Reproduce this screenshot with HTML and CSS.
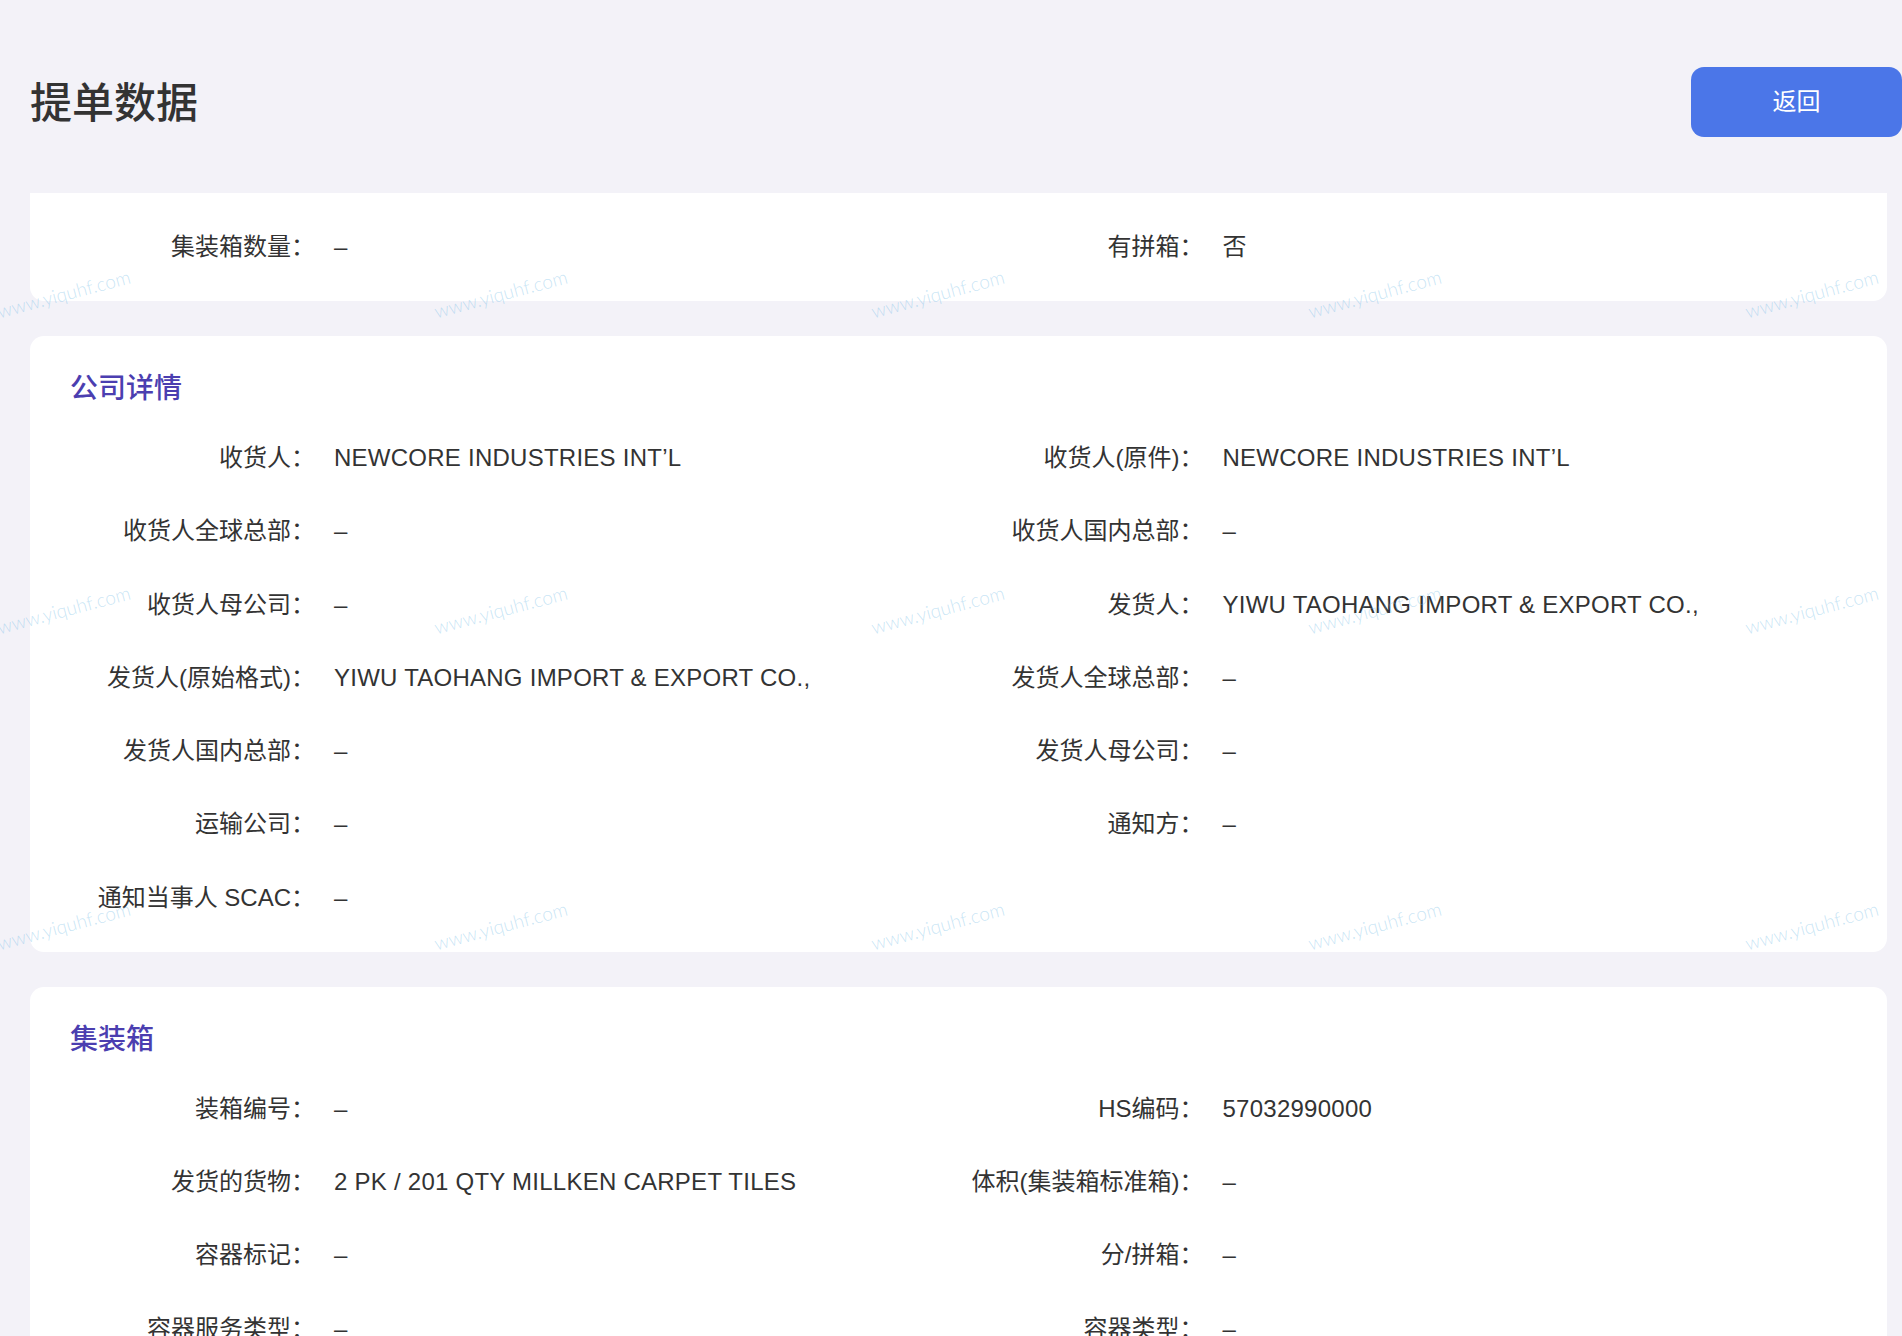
FILE: index.html
```html
<!DOCTYPE html>
<html lang="zh-CN">
<head>
<meta charset="utf-8">
<title>提单数据</title>
<link rel="stylesheet" href="styles.css">
</head>
<body>
<div class="wm-layer" aria-hidden="true">
  <div class="wm-grid">
    <span>www.yiquhf.com</span><span>www.yiquhf.com</span><span>www.yiquhf.com</span><span>www.yiquhf.com</span><span>www.yiquhf.com</span>
    <span>www.yiquhf.com</span><span>www.yiquhf.com</span><span>www.yiquhf.com</span><span>www.yiquhf.com</span><span>www.yiquhf.com</span>
    <span>www.yiquhf.com</span><span>www.yiquhf.com</span><span>www.yiquhf.com</span><span>www.yiquhf.com</span><span>www.yiquhf.com</span>
  </div>
</div>

<header class="page-head">
  <h1 class="page-title">提单数据</h1>
  <button class="btn-back" type="button">返回</button>
</header>

<section class="card card-summary">
  <div class="fields">
    <div class="field"><span class="label">集装箱数量：</span><span class="value">–</span></div>
    <div class="field"><span class="label">有拼箱：</span><span class="value">否</span></div>
  </div>
</section>

<section class="card">
  <h2 class="card-title">公司详情</h2>
  <div class="fields">
    <div class="field"><span class="label">收货人：</span><span class="value">NEWCORE INDUSTRIES INT’L</span></div>
    <div class="field"><span class="label">收货人(原件)：</span><span class="value">NEWCORE INDUSTRIES INT’L</span></div>
    <div class="field"><span class="label">收货人全球总部：</span><span class="value">–</span></div>
    <div class="field"><span class="label">收货人国内总部：</span><span class="value">–</span></div>
    <div class="field"><span class="label">收货人母公司：</span><span class="value">–</span></div>
    <div class="field"><span class="label">发货人：</span><span class="value">YIWU TAOHANG IMPORT &amp; EXPORT CO.,</span></div>
    <div class="field"><span class="label">发货人(原始格式)：</span><span class="value">YIWU TAOHANG IMPORT &amp; EXPORT CO.,</span></div>
    <div class="field"><span class="label">发货人全球总部：</span><span class="value">–</span></div>
    <div class="field"><span class="label">发货人国内总部：</span><span class="value">–</span></div>
    <div class="field"><span class="label">发货人母公司：</span><span class="value">–</span></div>
    <div class="field"><span class="label">运输公司：</span><span class="value">–</span></div>
    <div class="field"><span class="label">通知方：</span><span class="value">–</span></div>
    <div class="field"><span class="label">通知当事人 SCAC：</span><span class="value">–</span></div>
    <div class="field"></div>
  </div>
</section>

<section class="card">
  <h2 class="card-title">集装箱</h2>
  <div class="fields">
    <div class="field"><span class="label">装箱编号：</span><span class="value">–</span></div>
    <div class="field"><span class="label">HS编码：</span><span class="value">57032990000</span></div>
    <div class="field"><span class="label">发货的货物：</span><span class="value">2 PK / 201 QTY MILLKEN CARPET TILES</span></div>
    <div class="field"><span class="label">体积(集装箱标准箱)：</span><span class="value">–</span></div>
    <div class="field"><span class="label">容器标记：</span><span class="value">–</span></div>
    <div class="field"><span class="label">分/拼箱：</span><span class="value">–</span></div>
    <div class="field"><span class="label">容器服务类型：</span><span class="value">–</span></div>
    <div class="field"><span class="label">容器类型：</span><span class="value">–</span></div>
  </div>
</section>
</body>
</html>
```

FILE: styles.css
```css
html, body {
  margin: 0;
  padding: 0;
}

body {
  position: relative;
  width: 1902px;
  height: 1336px;
  overflow: hidden;
  background: #f3f2f8;
  color: #333333;
  font-family: "Liberation Sans", "Noto Sans CJK SC", sans-serif;
}

/* header */
.page-head {
  display: flex;
  justify-content: space-between;
  align-items: center;
  padding: 67px 0 0 30px;
  margin-bottom: 56px;
}

.page-title {
  margin: 0;
  padding-bottom: 5px;
  font-family: "Noto Sans CJK SC", sans-serif;
  font-size: 42px;
  font-weight: 500;
  line-height: 65px;
  color: #333333;
}

.btn-back {
  flex-shrink: 0;
  width: 211px;
  height: 70px;
  border: none;
  border-radius: 13px;
  background: #4b76e8;
  color: #ffffff;
  font-family: "Noto Sans CJK SC", sans-serif;
  font-size: 24px;
  line-height: 66px;
  padding: 0 0 4px;
}

/* cards */
.card {
  background: #ffffff;
  margin: 0 15px 35px 30px;
  border-radius: 14px;
  padding: 30px 40px 34px;
}

.card-summary {
  border-top-left-radius: 0;
  border-top-right-radius: 0;
  padding: 34px 40px;
}

.card-title {
  margin: 0 0 32px;
  font-family: "Noto Sans CJK SC", sans-serif;
  font-size: 28px;
  font-weight: 500;
  line-height: 40px;
  color: #4b3eb0;
}

.fields {
  display: grid;
  grid-template-columns: 1fr 1fr;
  row-gap: 33.3px;
}

.field {
  display: flex;
  font-size: 24px;
  line-height: 40px;
  min-height: 40px;
}

.label {
  flex-shrink: 0;
  width: 245px;
  text-align: right;
  color: #333333;
  white-space: nowrap;
}

.value {
  margin-left: 19px;
  color: #333333;
  letter-spacing: 0.25px;
  white-space: nowrap;
}

/* watermark overlay */
.wm-layer {
  position: absolute;
  top: 0;
  left: 0;
  width: 100%;
  height: 1100px;
  overflow: hidden;
  pointer-events: none;
  z-index: 10;
}

.wm-grid {
  display: grid;
  grid-template-columns: repeat(5, 437px);
  grid-auto-rows: 316px;
  margin: 135px 0 0 -155px;
}

.wm-grid span {
  display: flex;
  align-items: center;
  justify-content: center;
  font-family: "Lato", "Liberation Sans", sans-serif;
  font-weight: 300;
  font-size: 19px;
  color: rgba(110, 185, 230, 0.38);
  transform: rotate(-15deg);
  white-space: nowrap;
}
```
